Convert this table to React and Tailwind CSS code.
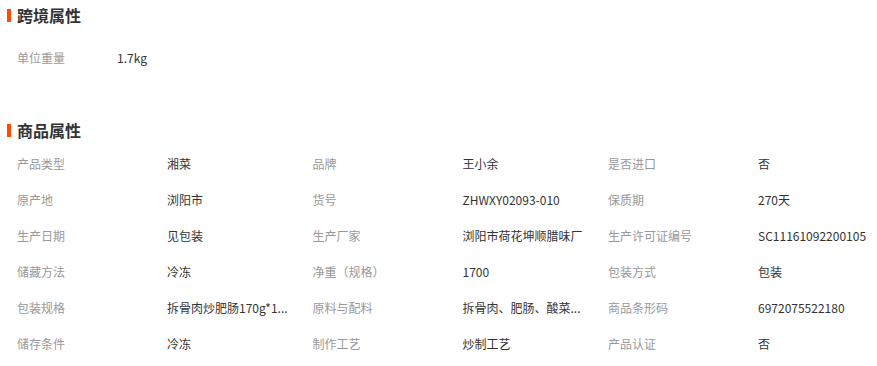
const crossBorder = [{ label: "单位重量", value: "1.7kg" }];

const goods = [
  ["产品类型", "湘菜", "品牌", "王小余", "是否进口", "否"],
  ["原产地", "浏阳市", "货号", "ZHWXY02093-010", "保质期", "270天"],
  ["生产日期", "见包装", "生产厂家", "浏阳市荷花坤顺腊味厂", "生产许可证编号", "SC11161092200105"],
  ["储藏方法", "冷冻", "净重（规格）", "1700", "包装方式", "包装"],
  ["包装规格", "拆骨肉炒肥肠170g*1...", "原料与配料", "拆骨肉、肥肠、酸菜...", "商品条形码", "6972075522180"],
  ["储存条件", "冷冻", "制作工艺", "炒制工艺", "产品认证", "否"],
];

function Heading({ title, className = "" }) {
  return (
    <div className={`flex h-[30px] items-center ${className}`}>
      <div className="h-[13px] w-[4px] bg-[#ff4a00]"></div>
      <div className="ml-[6px] text-[16px] font-bold leading-none text-[#333]">{title}</div>
    </div>
  );
}

function Pair({ label, value }) {
  return (
    <div className="flex w-[295.5px] shrink-0 items-center">
      <div className="w-[150px] shrink-0 whitespace-nowrap text-[#999]">{label}</div>
      <div className="whitespace-nowrap text-[#333]">{value}</div>
    </div>
  );
}

export default function App() {
  return (
    <div
      className="h-[366px] w-[877px] overflow-hidden bg-white pl-[7px] text-[12px]"
      style={{ fontFamily: '"Noto Sans CJK SC", "Liberation Sans", sans-serif' }}
    >
      <Heading title="跨境属性" />
      <div className="mt-[10px] pl-[10px]">
        {crossBorder.map((row) => (
          <div key={row.label} className="flex h-[36px] items-center">
            <div className="w-[100px] text-[#999]">{row.label}</div>
            <div className="text-[#333]">{row.value}</div>
          </div>
        ))}
      </div>

      <Heading title="商品属性" className="mt-[39px]" />
      <div className="mt-[1px] pl-[10px]">
        {goods.map((row, i) => (
          <div key={i} className="flex h-[36px] items-center">
            <Pair label={row[0]} value={row[1]} />
            <Pair label={row[2]} value={row[3]} />
            <Pair label={row[4]} value={row[5]} />
          </div>
        ))}
      </div>
    </div>
  );
}
